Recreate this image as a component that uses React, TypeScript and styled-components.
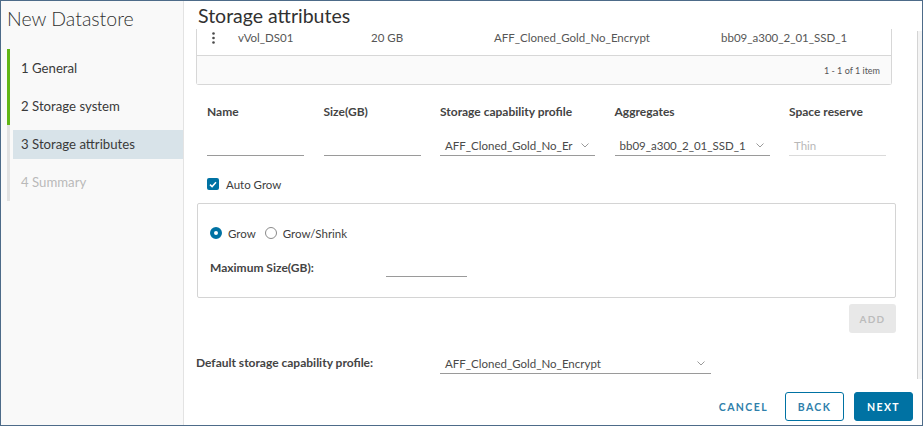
import React from "react";
import styled, { createGlobalStyle } from "styled-components";

const GlobalStyle = createGlobalStyle`
  html, body {
    margin: 0;
    padding: 0;
    background: #ffffff;
  }
  body {
    font-family: "Lato", "Open Sans", sans-serif;
    color: #333333;
  }
  * {
    box-sizing: border-box;
  }
`;

const BLUE = "#0072a3";

// Layout shell

const Frame = styled.div`
  width: 923px;
  height: 426px;
  border: 1px solid #4d6b89;
  display: flex;
  overflow: hidden;
  background: #ffffff;
`;

const Sidebar = styled.aside`
  width: 183px;
  flex-shrink: 0;
  background: #f9f9f9;
  border-right: 1px solid #e3e3e3;
  padding-top: 4px;
`;

const WizardTitle = styled.h1`
  margin: 0;
  padding-left: 6px;
  font-size: 19.5px;
  font-weight: 300;
  line-height: 28px;
  color: #313131;
`;

const StepList = styled.ol`
  list-style: none;
  margin: 16px 0 0 6px;
  padding: 0;
`;

const StepRow = styled.li<{ $done?: boolean }>`
  height: 38px;
  display: flex;
  align-items: center;
  padding-left: 3px;
  border-left: 3px solid ${(p) => (p.$done ? "#60b515" : "#e2e2e2")};
`;

const StepLabel = styled.span<{ $active?: boolean; $disabled?: boolean }>`
  flex: 1;
  height: 29px;
  display: flex;
  align-items: center;
  padding-left: 8px;
  font-size: 13.2px;
  color: ${(p) => (p.$disabled ? "#b9b9b9" : "#3a3a3a")};
  background: ${(p) => (p.$active ? "#d8e3e9" : "transparent")};
`;

const Main = styled.main`
  flex: 1;
  display: flex;
  flex-direction: column;
  padding-left: 12px;
`;

const ScrollTrack = styled.div`
  width: 5px;
  flex-shrink: 0;
  margin: 30px 0 46px;
  border-left: 1px solid #d4d4d4;
  background: #f4f4f4;
`;

const PageTitle = styled.h2`
  margin: 0;
  padding: 3px 0 0 2px;
  height: 28px;
  font-size: 19.5px;
  font-weight: 400;
  line-height: 24px;
  color: #313131;
`;

// Datagrid

const Grid = styled.div`
  width: 696px;
  border: 1px solid #d7d7d7;
  border-top: none;
  border-radius: 0 0 3px 3px;
`;

const GridRow = styled.div`
  height: 27px;
  display: grid;
  grid-template-columns: 41px 133px 123px 227px 1fr;
  align-items: center;
  padding-bottom: 9px;
  border-bottom: 1px solid #d7d7d7;
  font-size: 11.5px;
  color: #565656;
`;

const KebabCell = styled.div`
  display: flex;
  justify-content: center;
  padding-right: 9px;
  color: #4a4a4a;
`;

const GridFooter = styled.div`
  height: 28px;
  background: #fafafa;
  display: flex;
  align-items: center;
  justify-content: flex-end;
  padding-right: 11px;
  font-size: 9px;
  color: #565656;
`;

// Form

const FieldRow = styled.div`
  display: flex;
  gap: 19.5px;
  margin: 19px 0 0 11px;
`;

const Field = styled.div<{ $w: number }>`
  width: ${(p) => p.$w}px;
  display: flex;
  flex-direction: column;
`;

const FieldLabel = styled.label`
  font-size: 12px;
  font-weight: 700;
  line-height: 16px;
  color: #444444;
  margin-bottom: 15px;
`;

const Underline = styled.div<{ $muted?: boolean; $w?: number }>`
  height: 21px;
  width: ${(p) => (p.$w ? `${p.$w}px` : "100%")};
  display: flex;
  align-items: center;
  justify-content: space-between;
  padding: 0 6px 0 5px;
  border-bottom: 1px solid ${(p) => (p.$muted ? "#dadada" : "#9a9a9a")};
  font-size: 11.5px;
  color: ${(p) => (p.$muted ? "#b8b8b8" : "#4a4a4a")};
  white-space: nowrap;
  overflow: hidden;
`;

const Chevron = () => (
  <svg width="8" height="5" viewBox="0 0 8 5" style={{ flexShrink: 0 }}>
    <path d="M0.5 0.5 L4 4 L7.5 0.5" fill="none" stroke="#9a9a9a" strokeWidth="1" />
  </svg>
);

const CheckRow = styled.div`
  display: flex;
  align-items: center;
  gap: 7px;
  margin: 21px 0 0 11px;
  height: 14px;
  font-size: 11.5px;
  color: #3d3d3d;
`;

const CheckBox = styled.span`
  width: 12px;
  height: 12px;
  border-radius: 2px;
  background: ${BLUE};
  display: flex;
  align-items: center;
  justify-content: center;
`;

const GrowBox = styled.div`
  width: 699px;
  height: 95px;
  margin: 12px 0 0 1px;
  border: 1px solid #d4d4d4;
  border-radius: 2px;
  padding: 21px 0 0 12px;
`;

const RadioGroup = styled.div`
  display: flex;
  align-items: center;
  height: 16px;
  font-size: 11.5px;
  color: #3d3d3d;
`;

const RadioOption = styled.span`
  display: flex;
  align-items: center;
  gap: 6px;
  margin-right: 9px;
`;

const RadioDot = styled.span<{ $checked?: boolean }>`
  width: 12px;
  height: 12px;
  border-radius: 50%;
  border: ${(p) => (p.$checked ? `4px solid ${BLUE}` : "1px solid #8a8a8a")};
  background: #ffffff;
`;

const MaxRow = styled.div`
  display: flex;
  align-items: flex-end;
  margin-top: 17px;
  height: 19px;
`;

const InlineLabel = styled.span<{ $w: number }>`
  width: ${(p) => p.$w}px;
  font-size: 12px;
  font-weight: 700;
  line-height: 16px;
  color: #444444;
  align-self: center;
`;

const AddBar = styled.div`
  width: 700px;
  display: flex;
  justify-content: flex-end;
  margin-top: 6px;
`;

const AddButton = styled.button`
  width: 47px;
  height: 29px;
  border: none;
  border-radius: 3px;
  background: #e8e8e8;
  color: #bcbcbc;
  font-family: inherit;
  font-size: 10px;
  font-weight: 700;
  letter-spacing: 1.2px;
`;

const DefaultRow = styled.div`
  display: flex;
  align-items: flex-end;
  margin-top: 18px;
  height: 23px;
`;

// Wizard footer

const Footer = styled.div`
  display: flex;
  justify-content: flex-end;
  align-items: center;
  gap: 10px;
  margin: 18px 4px 0 0;
`;

const WizardButton = styled.button<{ $variant: "flat" | "outline" | "solid" }>`
  height: 29px;
  padding: 0 ${(p) => (p.$variant === "flat" ? "12px" : "0")};
  min-width: ${(p) => (p.$variant === "flat" ? "0" : "59px")};
  margin-right: ${(p) => (p.$variant === "flat" ? "-6px" : "0")};
  border-radius: 3px;
  border: 1px solid ${(p) => (p.$variant === "flat" ? "transparent" : BLUE)};
  background: ${(p) => (p.$variant === "solid" ? BLUE : "#ffffff")};
  color: ${(p) => (p.$variant === "solid" ? "#ffffff" : "#2f7fab")};
  font-family: inherit;
  font-size: 10.5px;
  font-weight: 700;
  letter-spacing: 1.4px;
`;

const steps = [
  { label: "1  General", done: true },
  { label: "2  Storage system", done: true },
  { label: "3  Storage attributes", active: true },
  { label: "4  Summary", disabled: true },
];

export default function App() {
  return (
    <>
      <GlobalStyle />
      <Frame>
        <Sidebar>
          <WizardTitle>New Datastore</WizardTitle>
          <StepList>
            {steps.map((s) => (
              <StepRow key={s.label} $done={s.done}>
                <StepLabel $active={s.active} $disabled={s.disabled}>
                  {s.label.replace("  ", "\u00a0")}
                </StepLabel>
              </StepRow>
            ))}
          </StepList>
        </Sidebar>

        <Main>
          <PageTitle>Storage attributes</PageTitle>

          <Grid>
            <GridRow>
              <KebabCell>
                <svg width="3" height="12" viewBox="0 0 3 12">
                  <circle cx="1.5" cy="1.5" r="1.3" fill="#4a4a4a" />
                  <circle cx="1.5" cy="6" r="1.3" fill="#4a4a4a" />
                  <circle cx="1.5" cy="10.5" r="1.3" fill="#4a4a4a" />
                </svg>
              </KebabCell>
              <span>vVol_DS01</span>
              <span>20 GB</span>
              <span>AFF_Cloned_Gold_No_Encrypt</span>
              <span>bb09_a300_2_01_SSD_1</span>
            </GridRow>
            <GridFooter>1 - 1 of 1 item</GridFooter>
          </Grid>

          <FieldRow>
            <Field $w={97}>
              <FieldLabel>Name</FieldLabel>
              <Underline />
            </Field>
            <Field $w={97}>
              <FieldLabel>Size(GB)</FieldLabel>
              <Underline />
            </Field>
            <Field $w={155}>
              <FieldLabel>Storage capability profile</FieldLabel>
              <Underline>
                <span>AFF_Cloned_Gold_No_Er</span>
                <Chevron />
              </Underline>
            </Field>
            <Field $w={155}>
              <FieldLabel>Aggregates</FieldLabel>
              <Underline>
                <span>bb09_a300_2_01_SSD_1</span>
                <Chevron />
              </Underline>
            </Field>
            <Field $w={97}>
              <FieldLabel>Space reserve</FieldLabel>
              <Underline $muted>Thin</Underline>
            </Field>
          </FieldRow>

          <CheckRow>
            <CheckBox>
              <svg width="8" height="7" viewBox="0 0 8 7">
                <path d="M1 3.6 L3.1 5.6 L7 1.2" fill="none" stroke="#ffffff" strokeWidth="1.5" />
              </svg>
            </CheckBox>
            Auto Grow
          </CheckRow>

          <GrowBox>
            <RadioGroup>
              <RadioOption>
                <RadioDot $checked />
                Grow
              </RadioOption>
              <RadioOption>
                <RadioDot />
                Grow/Shrink
              </RadioOption>
            </RadioGroup>
            <MaxRow>
              <InlineLabel $w={176}>Maximum Size(GB):</InlineLabel>
              <Underline $w={81} />
            </MaxRow>
          </GrowBox>

          <AddBar>
            <AddButton disabled>ADD</AddButton>
          </AddBar>

          <DefaultRow>
            <InlineLabel $w={244}>Default storage capability profile:</InlineLabel>
            <Underline $w={271}>
              <span>AFF_Cloned_Gold_No_Encrypt</span>
              <Chevron />
            </Underline>
          </DefaultRow>

          <Footer>
            <WizardButton $variant="flat">CANCEL</WizardButton>
            <WizardButton $variant="outline">BACK</WizardButton>
            <WizardButton $variant="solid">NEXT</WizardButton>
          </Footer>
        </Main>

        <ScrollTrack />
      </Frame>
    </>
  );
}
